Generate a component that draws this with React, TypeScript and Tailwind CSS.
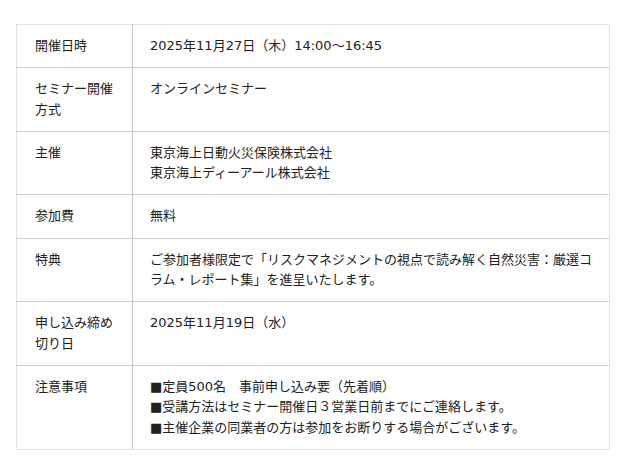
const rows: { label: string; content: string[] }[] = [
  { label: '開催日時', content: ['2025年11月27日（木）14:00〜16:45'] },
  { label: 'セミナー開催方式', content: ['オンラインセミナー'] },
  { label: '主催', content: ['東京海上日動火災保険株式会社', '東京海上ディーアール株式会社'] },
  { label: '参加費', content: ['無料'] },
  {
    label: '特典',
    content: ['ご参加者様限定で「リスクマネジメントの視点で読み解く自然災害：厳選コラム・レポート集」を進呈いたします。'],
  },
  { label: '申し込み締め切り日', content: ['2025年11月19日（水）'] },
  {
    label: '注意事項',
    content: [
      '■定員500名　事前申し込み要（先着順）',
      '■受講方法はセミナー開催日３営業日前までにご連絡します。',
      '■主催企業の同業者の方は参加をお断りする場合がございます。',
    ],
  },
]

export default function App() {
  return (
    <div
      className="min-h-[471px] bg-white pt-6 pl-4 pr-[30px] text-[13px] leading-[20.3px] text-[#222]"
      style={{ fontFamily: '"DejaVu Sans", "Noto Sans CJK JP", sans-serif' }}
    >
      <table className="w-full border-collapse border border-[#e3e3e3]">
        <tbody>
          {rows.map((r, i) => (
            <tr key={i} className={i > 0 ? 'border-t border-[#cfcfcf]' : ''}>
              <th className="w-[116px] border-r border-[#c4c4c4] py-[11px] pl-[18px] pr-4 text-left align-top font-normal">
                {r.label}
              </th>
              <td className="py-[11px] pl-[17px] pr-3 align-top">
                {r.content.map((c, j) => (
                  <div key={j}>{c}</div>
                ))}
              </td>
            </tr>
          ))}
        </tbody>
      </table>
    </div>
  )
}
